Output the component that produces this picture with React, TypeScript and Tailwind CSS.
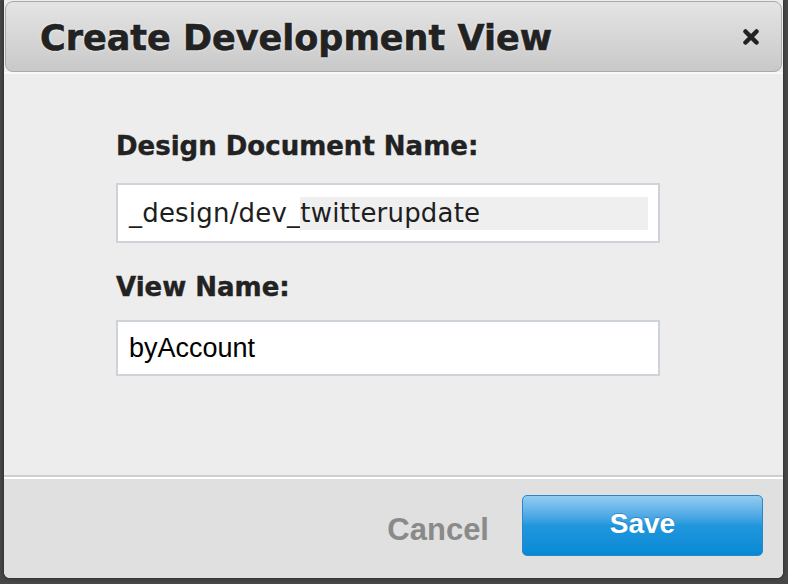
const App = () => {
    return (
        <div className="w-[788px] h-[584px] bg-[#474747] overflow-hidden">
            <div className="ml-[4px] w-[779px] h-[578px] bg-[#ededed] rounded-b-[6px] flex flex-col overflow-hidden shadow-[0_0_4px_rgba(0,0,0,0.5)]">
                {/* Header */}
                <div className="mx-[1px] mt-[1px] h-[71px] shrink-0 rounded-[8px] border border-[#a9a9a9] bg-gradient-to-b from-[#e4e4e4] to-[#c9c9c9] flex items-start justify-between pl-[34px] pr-[22px] pt-[16px]">
                    <h1 className="font-['DejaVu_Sans',sans-serif] font-bold text-[35px] leading-[40px] text-[#222] [-webkit-text-stroke:0.6px_#222] [text-shadow:0_0_3px_#fff]">
                        Create Development View
                    </h1>
                    <button className="mt-[11px] w-[16px] h-[16px]" aria-label="Close">
                        <svg viewBox="0 0 16 16" className="w-[16px] h-[16px]">
                            <path
                                d="M2.5 2.5 L13.5 13.5 M13.5 2.5 L2.5 13.5"
                                stroke="#222"
                                strokeWidth="4.5"
                                strokeLinecap="round"
                                fill="none"
                            />
                        </svg>
                    </button>
                </div>
                <div className="h-[2px] shrink-0 bg-[#f8f8f8]" />

                {/* Body */}
                <div className="flex-1 pl-[112px] pt-[57px] font-['DejaVu_Sans',sans-serif]">
                    <label className="block font-bold text-[26px] leading-[30px] text-[#222] [-webkit-text-stroke:0.4px_#222]">
                        Design Document Name:
                    </label>
                    <div className="mt-[22px] w-[544px] h-[60px] border-2 border-[#cdd3d8] bg-white flex items-center pl-[11px] pr-[10px] text-[26px] tracking-[0.2px] text-[#1e1e1e]">
                        <span className="leading-[33px] whitespace-pre">_design/dev_</span>
                        <span className="flex-1 leading-[33px] bg-[#efefef]">twitterupdate</span>
                    </div>

                    <label className="block mt-[29px] font-bold text-[26px] leading-[30px] text-[#222] [-webkit-text-stroke:0.4px_#222]">
                        View Name:
                    </label>
                    <div className="mt-[18px] w-[544px] h-[56px] border-2 border-[#cdd3d8] bg-white flex items-center pl-[11px]">
                        <span className="font-['Liberation_Sans',Arial,sans-serif] text-[27px] leading-[30px] text-black">
                            byAccount
                        </span>
                    </div>
                </div>

                {/* Footer */}
                <div className="shrink-0 border-t-2 border-[#ccd0d3]">
                    <div className="h-[2px] bg-white" />
                    <div className="h-[99px] bg-[#dfe0df] flex items-start justify-end pr-[20px] pt-[16px] gap-[33px] font-['Liberation_Sans',Arial,sans-serif]">
                        <button className="mt-[20px] font-bold text-[31px] leading-[30px] text-[#8a8a8a]">
                            Cancel
                        </button>
                        <button className="w-[241px] h-[61px] rounded-[5px] border border-[#2a86c9] bg-gradient-to-b from-[#92cdf1] via-[#1f97dd] to-[#0889d5] flex items-center justify-center pb-[4px] font-bold text-[28px] leading-[28px] text-white [text-shadow:0_-1px_0_rgba(0,60,120,0.3)]">
                            Save
                        </button>
                    </div>
                </div>
            </div>
        </div>
    );
};

export default App;
